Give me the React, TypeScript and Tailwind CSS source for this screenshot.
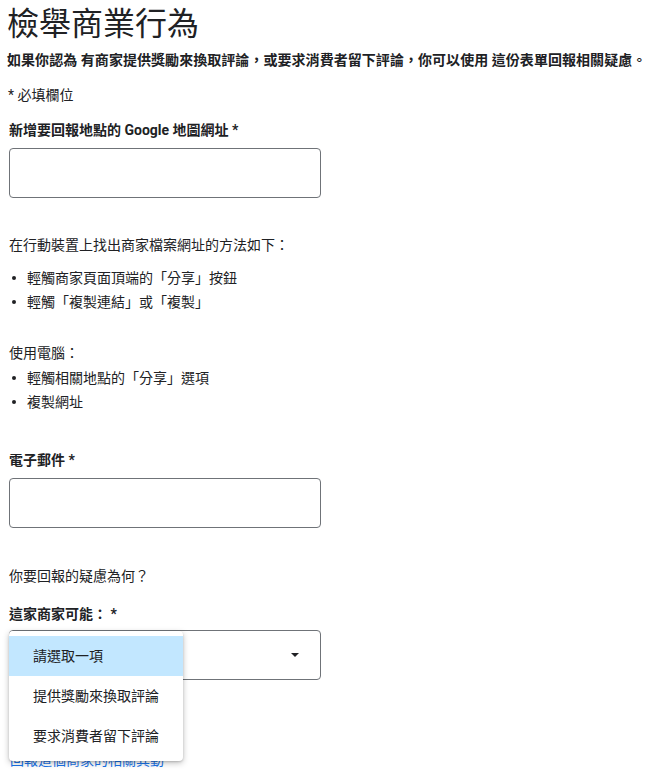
const Bullet = ({ children }: { children: React.ReactNode }) => (
    <li className="flex items-center h-[24px]">
        <span className="ml-[4px] mr-[11px] h-[4px] w-[4px] rounded-full bg-[#202124]" />
        <span>{children}</span>
    </li>
);

const App = () => {
    return (
        <div className="min-h-[775px] overflow-hidden bg-white px-[8px] text-[#202124] text-[14px] leading-[20px] font-['Roboto','Noto_Sans_CJK_TC',sans-serif]">
            <h1 className="pt-[4px] text-[32px] leading-[40px] font-normal ml-[-1px]">檢舉商業行為</h1>
            <p className="mt-[6px] whitespace-nowrap text-[14px] tracking-[0.05px] font-bold ml-[-1px]">
                如果你認為 有商家提供獎勵來換取評論，或要求消費者留下評論，你可以使用 這份表單回報相關疑慮。
            </p>
            <p className="mt-[15px]">* 必填欄位</p>

            <label className="block mt-[15px] font-bold pl-[1px]">新增要回報地點的 Google 地圖網址 *</label>
            <div className="mt-[8px] ml-[1px] h-[50px] w-[312px] rounded-[4px] border border-[#6f7378]" />

            <p className="mt-[37px] pl-[1px]">在行動裝置上找出商家檔案網址的方法如下：</p>
            <ul className="mt-[11px]">
                <Bullet>輕觸商家頁面頂端的「分享」按鈕</Bullet>
                <Bullet>輕觸「複製連結」或「複製」</Bullet>
            </ul>

            <p className="mt-[29px] pl-[1px]">使用電腦：</p>
            <ul className="mt-[3px]">
                <Bullet>輕觸相關地點的「分享」選項</Bullet>
                <Bullet>複製網址</Bullet>
            </ul>

            <label className="block mt-[36px] font-bold pl-[1px]">電子郵件 *</label>
            <div className="mt-[8px] ml-[1px] h-[50px] w-[312px] rounded-[4px] border border-[#6f7378]" />

            <p className="mt-[38px] pl-[1px]">你要回報的疑慮為何？</p>
            <label className="block mt-[18px] font-bold pl-[1px]">這家商家可能： *</label>

            <div className="relative mt-[6px] ml-[1px] w-[312px]">
                <div className="flex h-[50px] items-center justify-end rounded-[4px] border border-[#6f7378] pr-[21px]">
                    <svg width="8" height="4" viewBox="0 0 8 4">
                        <polygon points="0,0 8,0 4,4" fill="#202124" />
                    </svg>
                </div>
                <div className="absolute left-0 top-[1px] z-10 w-[174px] rounded-[4px] bg-white py-[5px] shadow-[0_2px_6px_rgba(0,0,0,0.25),0_1px_2px_rgba(0,0,0,0.15)]">
                    <div className="flex h-[40px] items-center bg-[#c2e7ff] pl-[24px]">請選取一項</div>
                    <div className="flex h-[40px] items-center pl-[24px]">提供獎勵來換取評論</div>
                    <div className="flex h-[40px] items-center pl-[24px]">要求消費者留下評論</div>
                </div>
            </div>

            <a className="block mt-[70px] pl-[2px] text-[#1a73e8]">回報這個商家的相關異動</a>
        </div>
    );
};

export default App;
